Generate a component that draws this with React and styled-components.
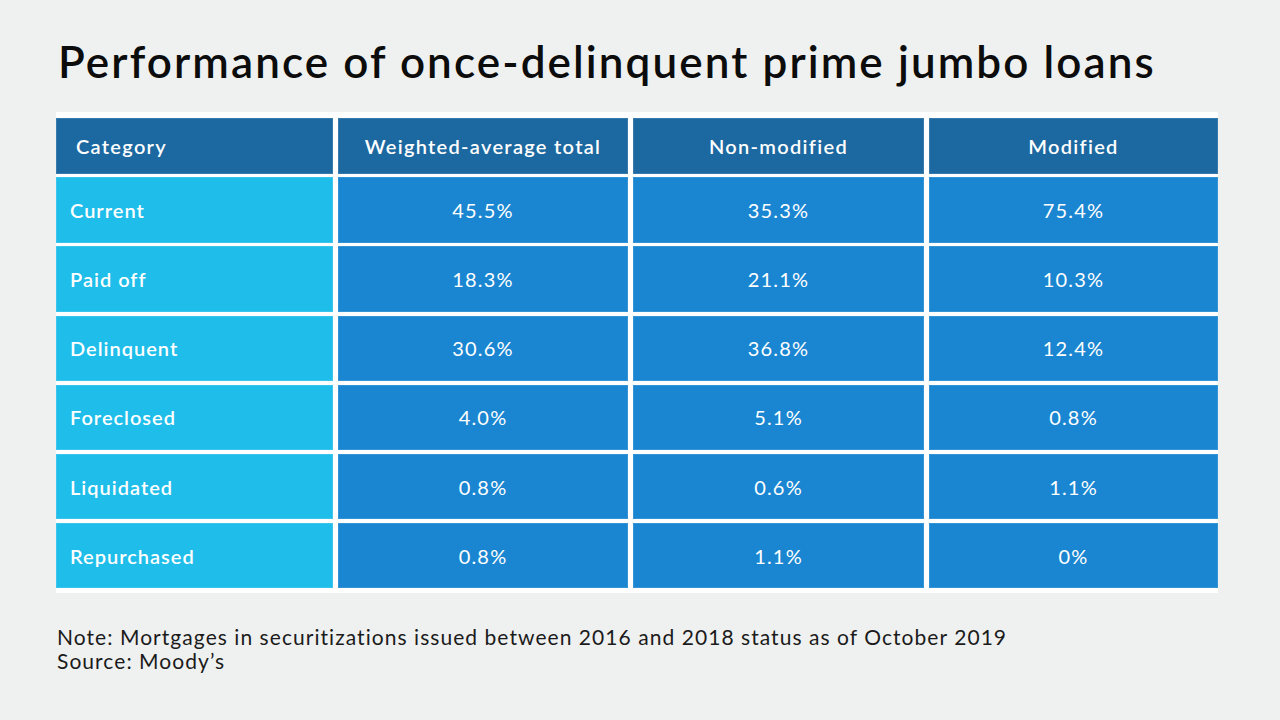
import React from "react";
import styled, { createGlobalStyle } from "styled-components";

const GlobalStyle = createGlobalStyle`
  html, body {
    margin: 0;
    padding: 0;
    background: #eff1f0;
  }
  body {
    font-family: Lato, "Open Sans", sans-serif;
  }
`;

const Page = styled.div`
  width: 1280px;
  height: 720px;
  box-sizing: border-box;
  padding: 37px 62px 0 56px;
  background: #eff1f0;
`;

const Title = styled.h1`
  margin: 0 0 0 2px;
  font-size: 44px;
  line-height: 48px;
  font-weight: 600;
  letter-spacing: 2.1px;
  color: #0c0c0c;
  white-space: nowrap;
`;

const Table = styled.div`
  margin-top: 27px;
  width: 1162px;
  background: #ffffff;
  padding: 6px 0 5px;
  display: grid;
  grid-template-columns: 277px 290px 291px 289px;
  grid-template-rows: 56px repeat(6, 65.7px);
  column-gap: 5px;
  row-gap: 3.4px;
`;

const colors = {
  head: "#1c68a0",
  label: "#1ebdea",
  value: "#1a86d1",
};

const Cell = styled.div`
  display: flex;
  align-items: center;
  justify-content: ${(p) => (p.$left ? "flex-start" : "center")};
  padding-left: ${(p) => (p.$variant === "head" && p.$left ? "20px" : p.$left ? "14px" : "0")};
  background: ${(p) => colors[p.$variant]};
  color: #ffffff;
  font-size: 20px;
  font-weight: ${(p) => (p.$variant === "value" ? 400 : 600)};
  letter-spacing: ${(p) => (p.$variant === "head" ? "1.3px" : p.$variant === "value" ? "1.2px" : "1px")};
  box-shadow: inset 0 0 0 1px rgba(255, 255, 255, 0.12);
`;

const Notes = styled.div`
  margin: 32px 0 0 1px;
  font-size: 21px;
  line-height: 24px;
  color: #1b1b1b;
  letter-spacing: 1.05px;
  white-space: nowrap;
`;

const headers = ["Weighted-average total", "Non-modified", "Modified"];

const rows = [
  ["Current", "45.5%", "35.3%", "75.4%"],
  ["Paid off", "18.3%", "21.1%", "10.3%"],
  ["Delinquent", "30.6%", "36.8%", "12.4%"],
  ["Foreclosed", "4.0%", "5.1%", "0.8%"],
  ["Liquidated", "0.8%", "0.6%", "1.1%"],
  ["Repurchased", "0.8%", "1.1%", "0%"],
];

export default function App() {
  return (
    <Page>
      <GlobalStyle />
      <Title>Performance of once-delinquent prime jumbo loans</Title>
      <Table>
        <Cell $variant="head" $left>
          Category
        </Cell>
        {headers.map((h) => (
          <Cell key={h} $variant="head">
            {h}
          </Cell>
        ))}
        {rows.map((row) => (
          <React.Fragment key={row[0]}>
            <Cell $variant="label" $left>
              {row[0]}
            </Cell>
            {row.slice(1).map((v, i) => (
              <Cell key={i} $variant="value">
                {v}
              </Cell>
            ))}
          </React.Fragment>
        ))}
      </Table>
      <Notes>
        Note: Mortgages in securitizations issued between 2016 and 2018 status as of October 2019
        <br />
        Source: Moody’s
      </Notes>
    </Page>
  );
}
